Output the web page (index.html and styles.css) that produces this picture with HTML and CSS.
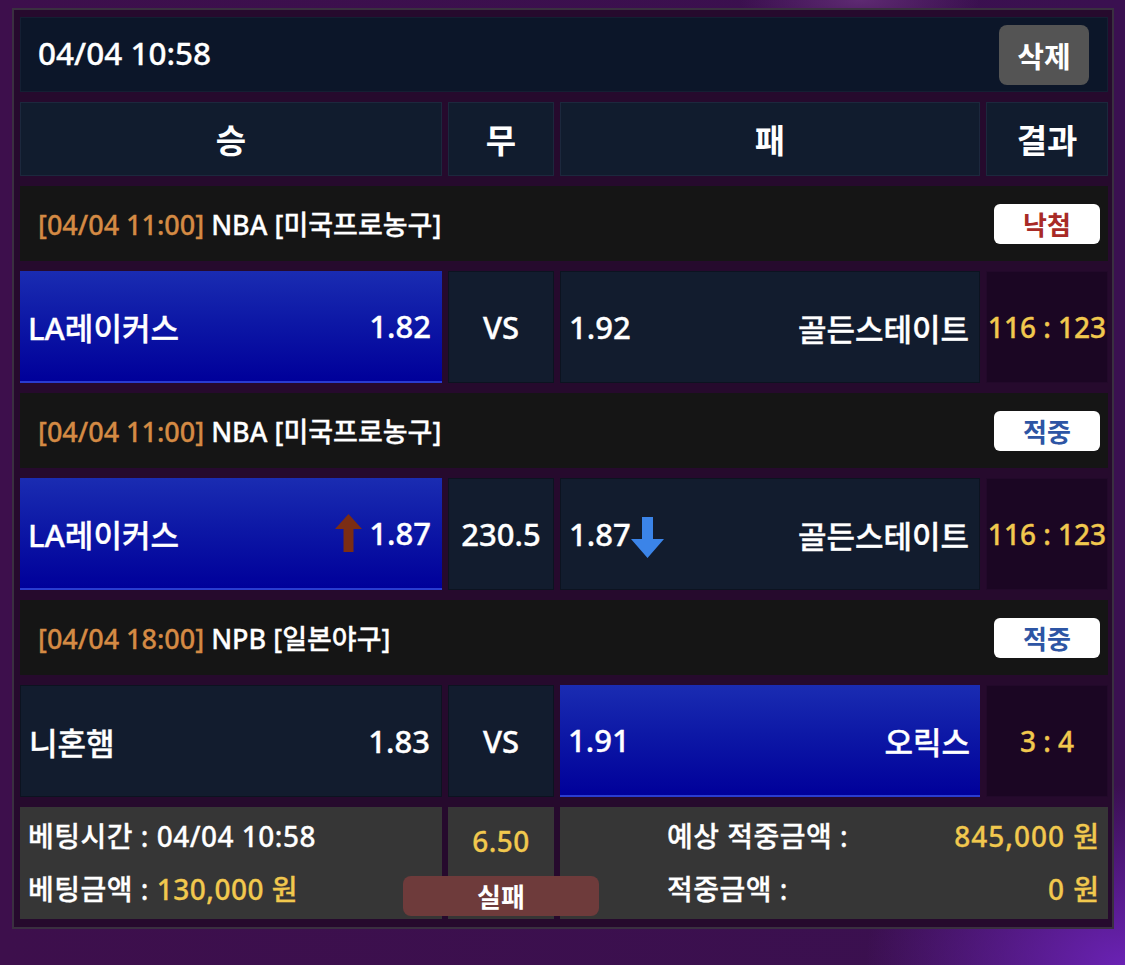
FILE: index.html
```html
<!DOCTYPE html>
<html lang="ko">
<head>
<meta charset="utf-8">
<title>베팅내역</title>
<link rel="stylesheet" href="styles.css">
</head>
<body>
<div class="page">
  <div class="panel">
    <div class="topbar">
      <span class="stamp">04/04 10:58</span>
      <button class="del">삭제</button>
    </div>

    <div class="grid colhead">
      <div class="ch">승</div>
      <div class="ch">무</div>
      <div class="ch">패</div>
      <div class="ch">결과</div>
    </div>

    <div class="ghead">
      <span class="gtitle"><span class="time">[04/04 11:00]</span> NBA [미국프로농구]</span>
      <span class="badge lose">낙첨</span>
    </div>
    <div class="grid teams">
      <div class="cell home sel"><span class="name">LA레이커스</span><span class="odds">1.82</span></div>
      <div class="cell mid">VS</div>
      <div class="cell away"><span class="odds">1.92</span><span class="name">골든스테이트</span></div>
      <div class="cell res">116 : 123</div>
    </div>

    <div class="ghead">
      <span class="gtitle"><span class="time">[04/04 11:00]</span> NBA [미국프로농구]</span>
      <span class="badge win">적중</span>
    </div>
    <div class="grid teams">
      <div class="cell home sel"><span class="name">LA레이커스</span><span class="odds"><svg class="arr up" width="27" height="38" viewBox="0 0 27 38"><path d="M13.5 0 L27 15 L18.5 15 L18.5 38 L8.5 38 L8.5 15 L0 15 Z" fill="#7b2d14"/></svg>1.87</span></div>
      <div class="cell mid">230.5</div>
      <div class="cell away"><span class="odds">1.87<svg class="arr down" width="33" height="41" viewBox="0 0 33 41"><path d="M11 0 L22 0 L22 22 L33 22 L16.5 41 L0 22 L11 22 Z" fill="#3b84e8"/></svg></span><span class="name">골든스테이트</span></div>
      <div class="cell res">116 : 123</div>
    </div>

    <div class="ghead">
      <span class="gtitle"><span class="time">[04/04 18:00]</span> NPB [일본야구]</span>
      <span class="badge win">적중</span>
    </div>
    <div class="grid teams">
      <div class="cell home"><span class="name">니혼햄</span><span class="odds">1.83</span></div>
      <div class="cell mid">VS</div>
      <div class="cell away sel"><span class="odds">1.91</span><span class="name">오릭스</span></div>
      <div class="cell res">3 : 4</div>
    </div>

    <div class="footer">
      <div class="fl">
        <div class="frow">베팅시간 : 04/04 10:58</div>
        <div class="frow">베팅금액 : <span class="y">130,000 원</span></div>
      </div>
      <div class="fm"><span class="y">6.50</span></div>
      <div class="fr">
        <div class="frow"><span>예상 적중금액 :</span><span class="y">845,000 원</span></div>
        <div class="frow"><span>적중금액 :</span><span class="y">0 원</span></div>
      </div>
      <div class="fail">실패</div>
    </div>
  </div>
</div>
</body>
</html>
```

FILE: styles.css
```css
* { box-sizing: border-box; }

html, body {
  margin: 0;
  padding: 0;
}

body {
  width: 1125px;
  height: 965px;
  overflow: hidden;
  font-family: "Noto Sans", "Noto Sans CJK KR", sans-serif;
  color: #ffffff;
  background:
    radial-gradient(ellipse 260px 180px at 1125px 965px, #6a22b4 0%, rgba(106,34,180,0) 100%),
    radial-gradient(ellipse 120px 40px at 860px 0px, #5e2a72 0%, rgba(94,42,114,0) 100%),
    linear-gradient(90deg, #3d0f4c 0%, #3a1050 100%);
}

.page {
  padding: 8px 11px 0 12px;
}

.panel {
  width: 1102px;
  background: #260a2d;
  border: 2px solid #3a3040;
  padding: 7px 4px 8px 6px;
  display: flex;
  flex-direction: column;
  gap: 10px;
}

.topbar {
  height: 75px;
  background: #0c1629;
  border: 1px solid #141f33;
  display: flex;
  align-items: center;
  justify-content: space-between;
  padding: 0 18px 0 17px;
}

.stamp {
  font-size: 31.5px;
  font-weight: 500;
  margin-top: -4px;
  -webkit-text-stroke: 0.3px #ffffff;
}

.del {
  width: 90px;
  height: 60px;
  border: none;
  border-radius: 8px;
  background: #545454;
  color: #fff;
  font-family: inherit;
  font-size: 29px;
  font-weight: 700;
  padding: 0;
}

.grid {
  display: grid;
  grid-template-columns: 422px 106px 420px 122px;
  column-gap: 6px;
}

.colhead {
  height: 74px;
}

.ch {
  background: #111c2e;
  border: 1px solid #1c283d;
  display: flex;
  align-items: center;
  justify-content: center;
  font-size: 33px;
  font-weight: 700;
}

.ghead {
  height: 75px;
  background: #151515;
  display: flex;
  align-items: center;
  justify-content: space-between;
  padding: 0 8px 0 18px;
}

.gtitle {
  font-size: 27px;
  font-weight: 500;
  white-space: nowrap;
  -webkit-text-stroke: 0.3px currentColor;
}

.time {
  color: #d48a44;
}

.badge {
  width: 106px;
  height: 40px;
  background: #ffffff;
  border-radius: 6px;
  display: flex;
  align-items: center;
  justify-content: center;
  font-size: 26px;
  font-weight: 700;
}

.badge.lose { color: #a82a26; }
.badge.win { color: #2d55a4; }

.teams {
  height: 112px;
}

.cell {
  background: #121c2e;
  border: 1px solid #0c1320;
  display: flex;
  align-items: center;
  font-size: 31px;
  font-weight: 500;
  white-space: nowrap;
  -webkit-text-stroke: 0.35px currentColor;
}

.cell.home,
.cell.away {
  justify-content: space-between;
}

.cell.home { padding: 0 11px 0 8px; }
.cell.away { padding: 0 10px 0 8px; }

.cell.sel {
  background: linear-gradient(180deg, #1a2cb2 0%, #0d18a6 45%, #00009a 100%);
  border: none;
  border-bottom: 2px solid #2a3cd0;
}

.cell.mid {
  justify-content: center;
}

.cell.res {
  justify-content: center;
  background: #1b0623;
  border: 1px solid #22092a;
  color: #f1c84e;
  font-size: 28px;
}

.odds {
  display: flex;
  align-items: center;
}

.arr.up { margin-right: 7px; }
.arr.down { margin-left: 0; margin-top: 6px; }

.footer {
  position: relative;
  height: 112px;
  display: grid;
  grid-template-columns: 422px 106px 548px;
  column-gap: 6px;
  font-size: 28px;
  font-weight: 500;
  letter-spacing: 0.5px;
}

.fl, .fm, .fr {
  background: #363636;
}

.fl {
  padding: 1px 8px 0 8px;
  display: flex;
  flex-direction: column;
}

.frow {
  height: 53px;
  display: flex;
  align-items: center;
  justify-content: space-between;
  white-space: nowrap;
  -webkit-text-stroke: 0.3px currentColor;
}

.fl .frow { justify-content: flex-start; white-space: pre; }

.fm {
  display: flex;
  justify-content: center;
  padding-top: 15px;
  -webkit-text-stroke: 0.3px currentColor;
}

.fr {
  padding: 1px 8px 0 107px;
  display: flex;
  flex-direction: column;
}

.fr .y { letter-spacing: 1px; }

.y { color: #f1c84e; }

.fail {
  position: absolute;
  left: 383px;
  top: 69px;
  width: 196px;
  height: 40px;
  background: #6e3b3b;
  border-radius: 8px;
  display: flex;
  align-items: center;
  justify-content: center;
  font-size: 26px;
  font-weight: 700;
  letter-spacing: 0;
}
```
